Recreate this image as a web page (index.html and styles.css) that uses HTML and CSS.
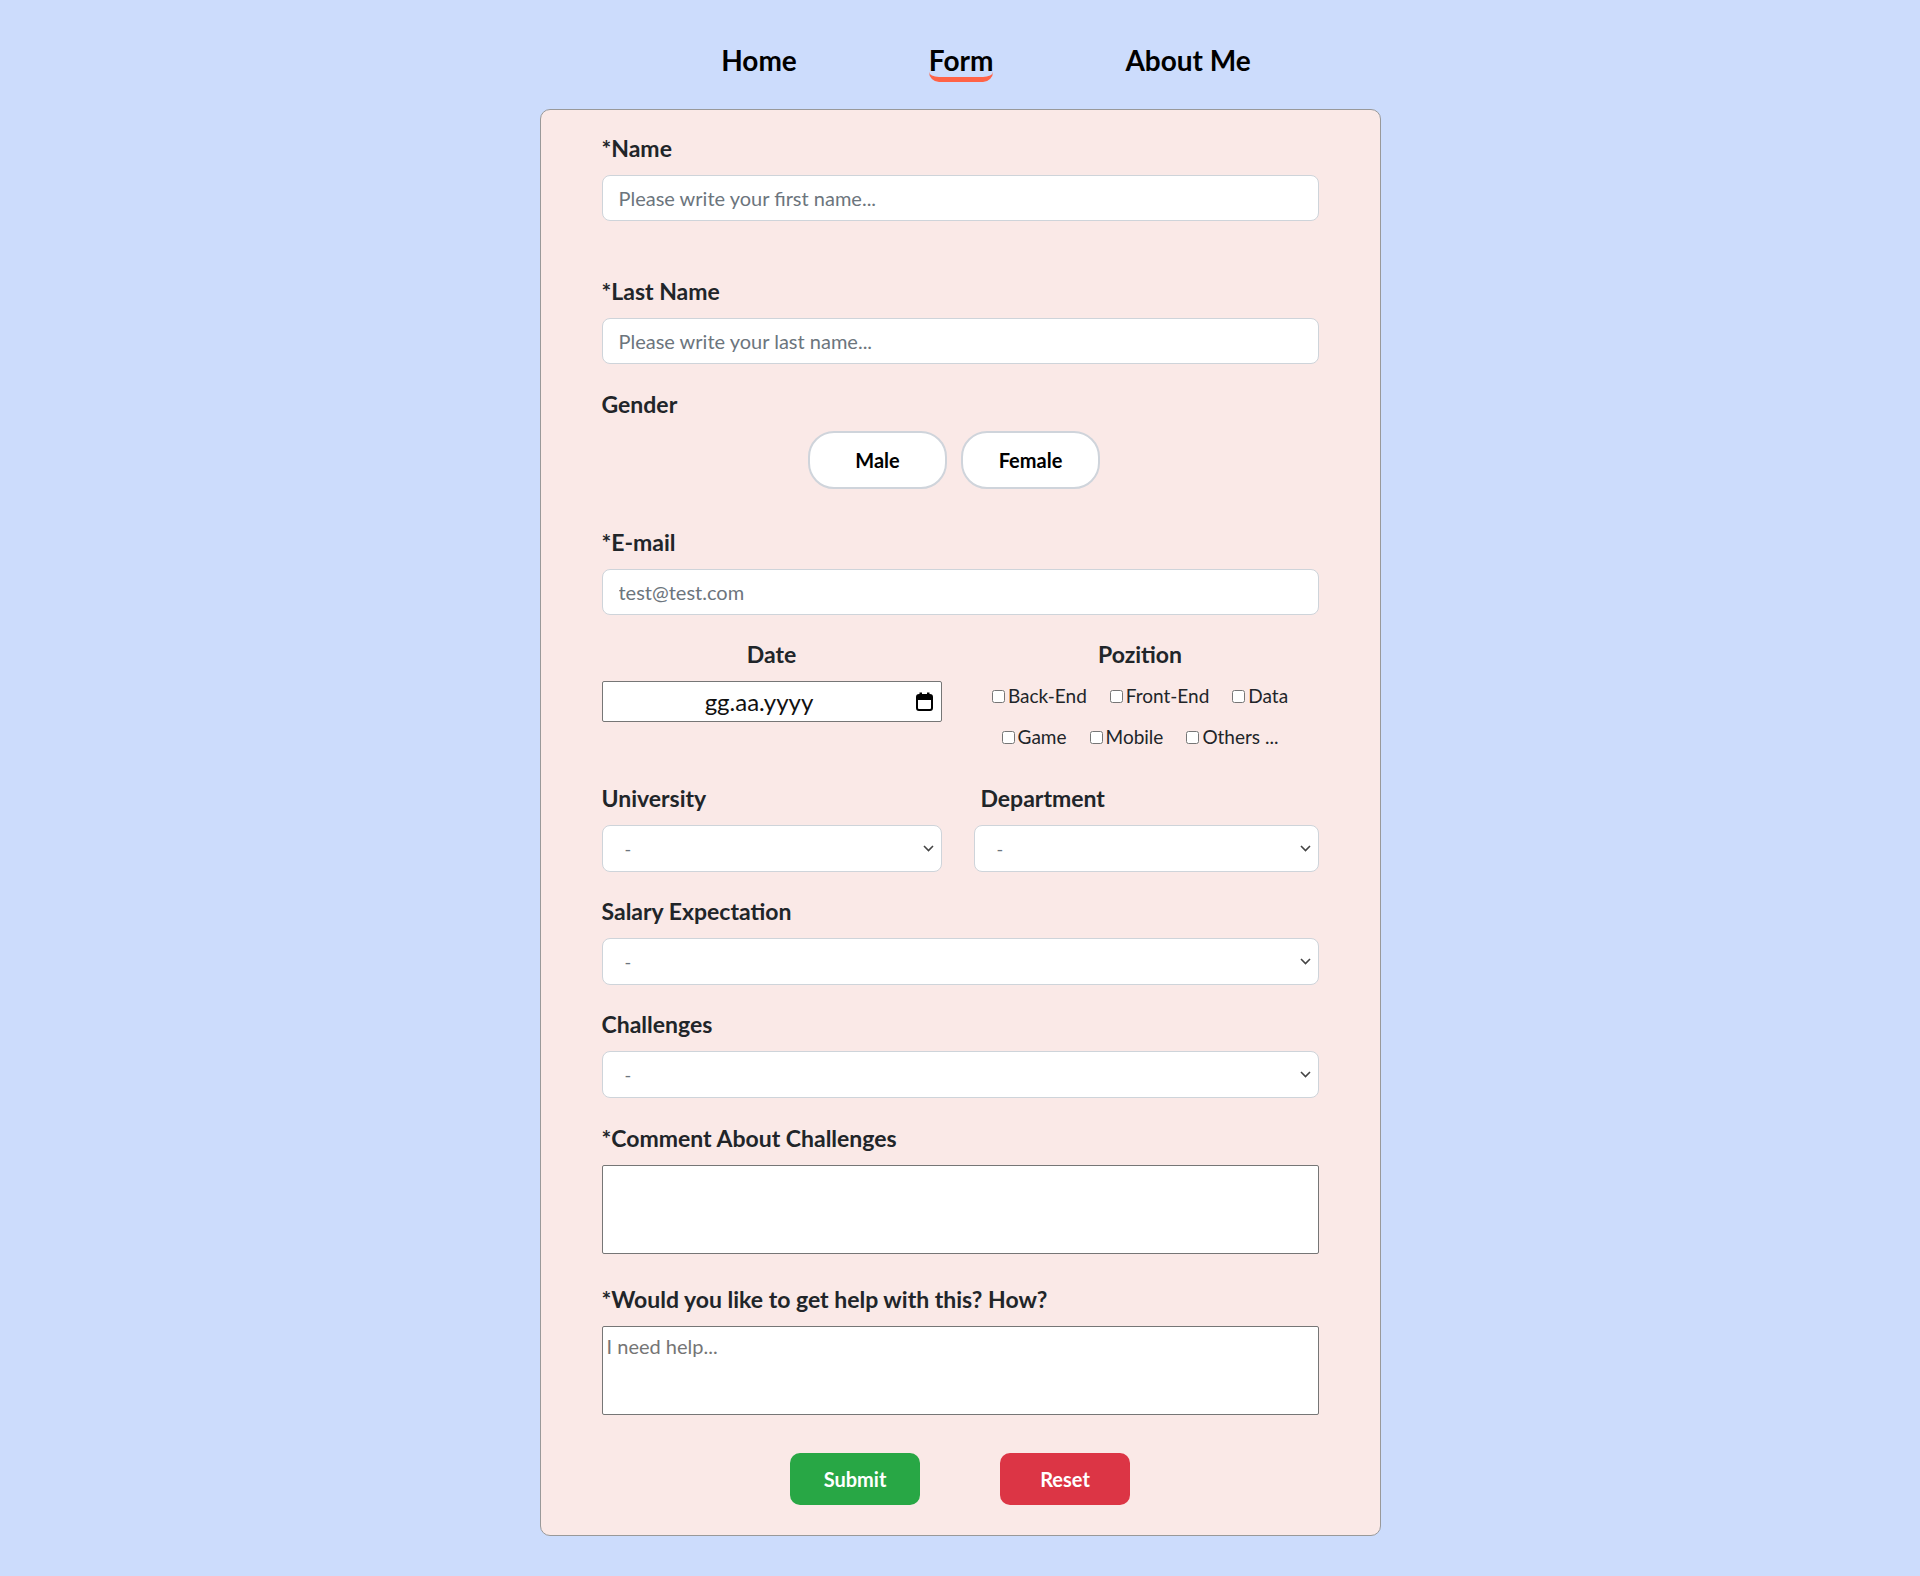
FILE: index.html
```html
<!DOCTYPE html>
<html lang="en">
<head>
<meta charset="utf-8">
<title>Form</title>
<link rel="stylesheet" href="styles.css">
</head>
<body>
<nav class="topnav">
  <a class="topnav__link" href="#">Home</a>
  <a class="topnav__link topnav__link--active" href="#">Form</a>
  <a class="topnav__link" href="#">About Me</a>
</nav>
<main class="card">
  <form class="form">
    <div class="field">
      <label class="field__label">*Name</label>
      <input class="field__input" type="text" placeholder="Please write your first name...">
    </div>
    <div class="field field--last">
      <label class="field__label">*Last Name</label>
      <input class="field__input" type="text" placeholder="Please write your last name...">
    </div>
    <div class="field field--gender">
      <label class="field__label">Gender</label>
      <div class="gender">
        <button type="button" class="gender__btn">Male</button>
        <button type="button" class="gender__btn">Female</button>
      </div>
    </div>
    <div class="field field--email">
      <label class="field__label">*E-mail</label>
      <input class="field__input" type="email" placeholder="test@test.com">
    </div>
    <div class="split">
      <div class="field">
        <label class="field__label field__label--center">Date</label>
        <div class="date-box">
          <span class="date-box__text">gg.aa.yyyy</span>
          <svg class="date-box__icon" viewBox="0 0 17 19" width="17" height="19">
            <rect x="1" y="3" width="15" height="15" rx="2" fill="none" stroke="#000" stroke-width="2"/>
            <rect x="1" y="3" width="15" height="5" fill="#000"/>
            <rect x="3.5" y="0.5" width="2.5" height="4" fill="#000"/>
            <rect x="11" y="0.5" width="2.5" height="4" fill="#000"/>
          </svg>
        </div>
      </div>
      <div class="field">
        <label class="field__label field__label--center">Pozition</label>
        <div class="positions">
          <div class="positions__row">
            <label class="check"><input type="checkbox">Back-End</label>
            <label class="check"><input type="checkbox">Front-End</label>
            <label class="check"><input type="checkbox">Data</label>
          </div>
          <div class="positions__row">
            <label class="check"><input type="checkbox">Game</label>
            <label class="check"><input type="checkbox">Mobile</label>
            <label class="check"><input type="checkbox">Others ...</label>
          </div>
        </div>
      </div>
    </div>
    <div class="pair">
      <div class="field">
        <label class="field__label">University</label>
        <select class="field__select"><option>-</option></select>
      </div>
      <div class="field">
        <label class="field__label field__label--inset">Department</label>
        <select class="field__select"><option>-</option></select>
      </div>
    </div>
    <div class="field field--gap">
      <label class="field__label">Salary Expectation</label>
      <select class="field__select"><option>-</option></select>
    </div>
    <div class="field field--gap">
      <label class="field__label">Challenges</label>
      <select class="field__select"><option>-</option></select>
    </div>
    <div class="field field--comment">
      <label class="field__label">*Comment About Challenges</label>
      <textarea class="field__textarea"></textarea>
    </div>
    <div class="field field--help">
      <label class="field__label">*Would you like to get help with this? How?</label>
      <textarea class="field__textarea" placeholder="I need help..."></textarea>
    </div>
    <div class="actions">
      <button type="submit" class="btn btn--submit">Submit</button>
      <button type="reset" class="btn btn--reset">Reset</button>
    </div>
  </form>
</main>
</body>
</html>
```
FILE: styles.css
```css
* { box-sizing: border-box; }

body {
  margin: 0;
  background: #ccdcfc;
  font-family: Lato, "Open Sans", sans-serif;
  color: #212529;
}

.topnav {
  display: flex;
  justify-content: center;
  gap: 132px;
  padding: 43px 0 0 52px;
}

.topnav__link {
  font-size: 28px;
  line-height: 34px;
  font-weight: 700;
  color: #000;
  text-decoration: none;
  border-bottom: 5px solid transparent;
  border-radius: 10px;
}

.topnav__link--active { border-bottom-color: #ff6347; }

.card {
  width: 841px;
  margin: 27px auto 0;
  background: #fae9e7;
  border: 1px solid #999;
  border-radius: 10px;
  padding: 26px 61px 30px;
}

.field__label {
  display: block;
  font-size: 23px;
  line-height: 25px;
  font-weight: 700;
  margin-bottom: 14px;
  color: #212529;
}

.field__label--center { text-align: center; }
.field__label--inset { padding-left: 7px; }

.field--last { margin-top: 58px; }
.field--gender { margin-top: 28px; }
.field--email { margin-top: 41px; }
.field--gap { margin-top: 27px; }
.field--comment { margin-top: 28px; }
.field--help { margin-top: 33px; }

.field__input {
  display: block;
  width: 100%;
  height: 46px;
  padding: 0 16px;
  font-family: inherit;
  font-size: 20px;
  color: #212529;
  background: #fff;
  border: 1px solid #ced4da;
  border-radius: 8px;
}

.field__input::placeholder { color: #6c757d; }

.gender {
  display: flex;
  justify-content: center;
  gap: 14px;
  padding-right: 12px;
}

.gender__btn {
  width: 139px;
  height: 58px;
  background: #fff;
  border: 2px solid #cfd4db;
  border-radius: 26px;
  font-family: inherit;
  font-size: 20px;
  font-weight: 700;
  color: #000;
}

.split {
  display: grid;
  grid-template-columns: 340px 1fr;
  column-gap: 20px;
  align-items: start;
  margin-top: 27px;
}

.date-box {
  display: flex;
  align-items: center;
  height: 41px;
  padding-right: 8px;
  background: #fff;
  border: 1px solid #767676;
  border-radius: 2px;
}

.date-box__text {
  flex: 1;
  text-align: center;
  font-size: 24px;
  color: #111;
}

.date-box__icon { display: block; }

.positions {
  display: flex;
  flex-direction: column;
  align-items: center;
  gap: 19px;
  padding-top: 4px;
}

.positions__row {
  display: flex;
  gap: 23px;
  font-size: 19px;
  line-height: 22px;
  color: #212529;
}

.check {
  display: flex;
  align-items: center;
}

.check input {
  width: 13px;
  height: 13px;
  margin: 0 3px 0 0;
}

.pair {
  display: grid;
  grid-template-columns: 340px 345px;
  column-gap: 32px;
  margin-top: 38px;
}

.field__select {
  display: block;
  width: 100%;
  height: 47px;
  padding: 0 30px 0 22px;
  font-family: inherit;
  font-size: 18px;
  color: #6c757d;
  -webkit-appearance: none;
  appearance: none;
  background: #fff url("data:image/svg+xml,%3Csvg xmlns='http://www.w3.org/2000/svg' viewBox='0 0 11 7'%3E%3Cpath d='M1 1l4.5 4.5L10 1' fill='none' stroke='%23444' stroke-width='1.6'/%3E%3C/svg%3E") no-repeat right 7px center / 11px 7px;
  border: 1px solid #ced4da;
  border-radius: 8px;
}

.field__textarea {
  display: block;
  width: 100%;
  height: 89px;
  padding: 7px 4px;
  font-family: inherit;
  font-size: 20px;
  color: #212529;
  background: #fff;
  border: 1px solid #767676;
  border-radius: 2px;
  resize: none;
}

.field__textarea::placeholder { color: #757575; }

.actions {
  display: flex;
  justify-content: center;
  gap: 80px;
  margin-top: 38px;
}

.btn {
  width: 130px;
  height: 52px;
  border: 0;
  border-radius: 10px;
  font-family: inherit;
  font-size: 20px;
  font-weight: 700;
  color: #fff;
}

.btn--submit { background: #28a745; }
.btn--reset { background: #dc3545; }
```
